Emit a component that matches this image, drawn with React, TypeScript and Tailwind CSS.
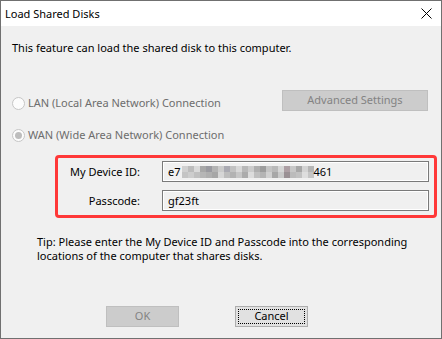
import React from "react";

const idBlocks = [
  ["bg-[#d0d0d0]", "bg-[#c4c4c4]"],
  ["bg-[#bcbcbc]", "bg-[#cdcdcd]"],
  ["bg-[#dadada]", "bg-[#c0c0c0]"],
  ["bg-[#a8a8a8]", "bg-[#b6b6b6]"],
  ["bg-[#9a9aa0]", "bg-[#afafaf]"],
  ["bg-[#b3b3b3]", "bg-[#a6a6a6]"],
  ["bg-[#cbcbcb]", "bg-[#d6d6d6]"],
  ["bg-[#aaaab2]", "bg-[#bdbdbd]"],
  ["bg-[#c2c2c2]", "bg-[#b2b2b2]"],
  ["bg-[#d8d8d8]", "bg-[#c6c6c6]"],
  ["bg-[#b8b8b8]", "bg-[#ababab]"],
  ["bg-[#cccccc]", "bg-[#dcdcdc]"],
  ["bg-[#afafaf]", "bg-[#bfbfbf]"],
  ["bg-[#9d9d9d]", "bg-[#b4b4b4]"],
  ["bg-[#c4c4c4]", "bg-[#d0d0d0]"],
  ["bg-[#b9b9b9]", "bg-[#a7a7a7]"],
  ["bg-[#d6d6d6]", "bg-[#c9c9c9]"],
  ["bg-[#ad9fa4]", "bg-[#9a9094]"],
  ["bg-[#c7c7c7]", "bg-[#bbbbbb]"],
  ["bg-[#a7a7a7]", "bg-[#c1c1c1]"],
  ["bg-[#d3d3d3]", "bg-[#dddddd]"],
  ["bg-[#b5b5b5]", "bg-[#c5c5c5]"],
];

function Radio({ checked, label }: { checked?: boolean; label: string }) {
  return (
    <div className="flex items-center gap-[3px] text-[#6d6d6d]">
      <span className="flex h-[13px] w-[13px] items-center justify-center rounded-full border border-[#c6c6c6] bg-[#fcfcfc]">
        {checked && <span className="h-[7px] w-[7px] rounded-full bg-[#bdbdbd]" />}
      </span>
      <span className="leading-[14px]">{label}</span>
    </div>
  );
}

function Field({ children }: { children: React.ReactNode }) {
  return (
    <div className="flex h-[21px] items-center border border-[#7a7a7a] bg-[#f0f0f0] pl-[5px] leading-[14px] text-black shadow-[inset_0_0_0_1px_#ffffff]">
      {children}
    </div>
  );
}

export default function App() {
  return (
    <div className="flex h-[339px] w-[442px] flex-col border border-[#707070] bg-[#f0f0f0] font-['Noto_Sans',Arial,sans-serif] text-[11px] text-black">
      <div className="flex h-[25px] items-center justify-between bg-white pl-[4px] pr-[9px]">
        <span className="leading-[14px]">Load Shared Disks</span>
        <svg width="11" height="11" viewBox="0 0 11 11" className="text-black">
          <path d="M0.5 0.5 L10.5 10.5 M10.5 0.5 L0.5 10.5" stroke="currentColor" strokeWidth="1" />
        </svg>
      </div>

      <div className="flex flex-1 flex-col pl-[11px]">
        <p className="mt-[15px] leading-[14px]">This feature can load the shared disk to this computer.</p>

        <div className="mt-[35px] flex items-start justify-between pr-[13px]">
          <div className="pt-[6px]">
            <Radio label="LAN (Local Area Network) Connection" />
          </div>
          <div className="flex h-[21px] w-[146px] items-center justify-center border border-[#bfbfbf] bg-[#cccccc] text-[#838383]">
            Advanced Settings
          </div>
        </div>

        <div className="mt-[17px]">
          <Radio checked label="WAN (Wide Area Network) Connection" />
        </div>

        <div className="ml-[43px] mt-[13px] w-[382px] rounded-[4px] border-[3px] border-[#ff3838] pb-[4px] pr-[5px] pt-[3px]">
          <div className="grid grid-cols-[82px_1fr] items-center gap-x-[22px] gap-y-[8px]">
            <span className="text-right leading-[14px]">My Device ID:</span>
            <Field>
              <span>e7</span>
              <span className="ml-[1px] flex">
                {idBlocks.map((col, i) => (
                  <span key={i} className="flex flex-col">
                    <span className={`h-[6px] w-[6px] ${col[0]}`} />
                    <span className={`h-[6px] w-[6px] ${col[1]}`} />
                  </span>
                ))}
              </span>
              <span>461</span>
            </Field>
            <span className="text-right leading-[14px]">Passcode:</span>
            <Field>gf23ft</Field>
          </div>
        </div>

        <p className="ml-[25px] mt-[17px] leading-[14px]">
          Tip: Please enter the My Device ID and Passcode into the corresponding
          <br />
          locations of the computer that shares disks.
        </p>

        <div className="ml-[94px] mt-[43px] flex gap-[56px]">
          <div className="flex h-[21px] w-[73px] items-center justify-center border border-[#bfbfbf] bg-[#cccccc] text-[#838383]">
            OK
          </div>
          <div className="flex h-[21px] w-[73px] items-center justify-center border border-[#adadad] bg-[#e1e1e1] p-[2px]">
            <div className="flex h-full w-full items-center justify-center border border-dotted border-black">
              Cancel
            </div>
          </div>
        </div>
      </div>
    </div>
  );
}
